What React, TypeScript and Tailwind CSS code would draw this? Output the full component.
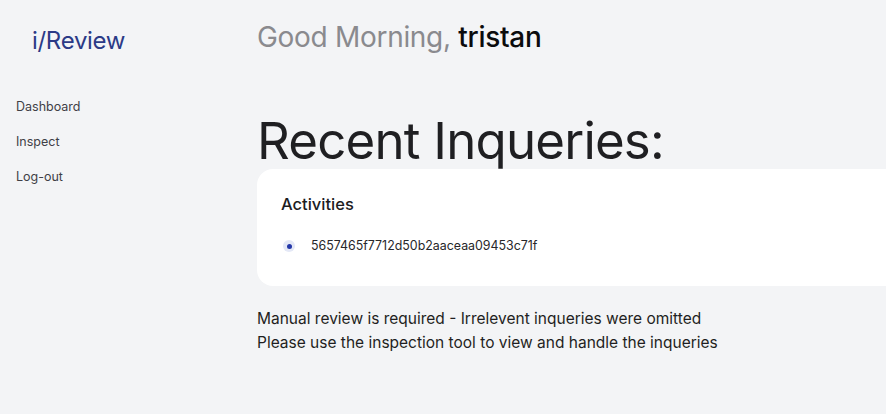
const links = ["Dashboard", "Inspect", "Log-out"];

export default function App() {
  return (
    <div className="flex h-[414px] w-full overflow-hidden bg-[#f3f4f6] font-['Inter',sans-serif]">
      <aside className="w-[257px] shrink-0">
        <div className="pl-[32px] pt-[26px] text-[24px] leading-[30px] tracking-[-0.3px] text-[#2b3a86]">i/Review</div>
        <nav className="mt-[42px] flex flex-col gap-[17px] pl-[16px]">
          {links.map((link) => (
            <a key={link} className="text-[12.5px] leading-[18px] text-[#3f3f46]">
              {link}
            </a>
          ))}
        </nav>
      </aside>

      <main className="min-w-0 flex-1">
        <h2 className="pt-[19px] text-[28px] leading-[36px] tracking-[-0.3px] text-[#8a8a8e]">
          Good Morning, <span className="font-medium text-[#0b0b0d]">tristan</span>
        </h2>

        <h1 className="mt-[56px] text-[51px] leading-[60px] tracking-[-0.8px] text-[#1f1f22]">Recent Inqueries:</h1>

        <section className="mr-[-40px] mt-[-2px] h-[117px] rounded-2xl bg-white px-[24px] pt-[24px]">
          <h3 className="text-[16.5px] font-medium leading-[22px] text-[#1c1c1f]">Activities</h3>
          <ul className="mt-[23px]">
            <li className="flex items-center gap-[16px] pl-[2px]">
              <span className="flex h-[12px] w-[12px] items-center justify-center rounded-full bg-[#e4e8f6]">
                <span className="h-[5px] w-[5px] rounded-full bg-[#2438a8]" />
              </span>
              <span className="text-[12.4px] leading-[16px] text-[#27272a]">5657465f7712d50b2aaceaa09453c71f</span>
            </li>
          </ul>
        </section>

        <div className="mt-[21px] text-[15.5px] leading-[24px] text-[#1f1f22]">
          <p>Manual review is required - Irrelevent inqueries were omitted</p>
          <p>Please use the inspection tool to view and handle the inqueries</p>
        </div>
      </main>
    </div>
  );
}
